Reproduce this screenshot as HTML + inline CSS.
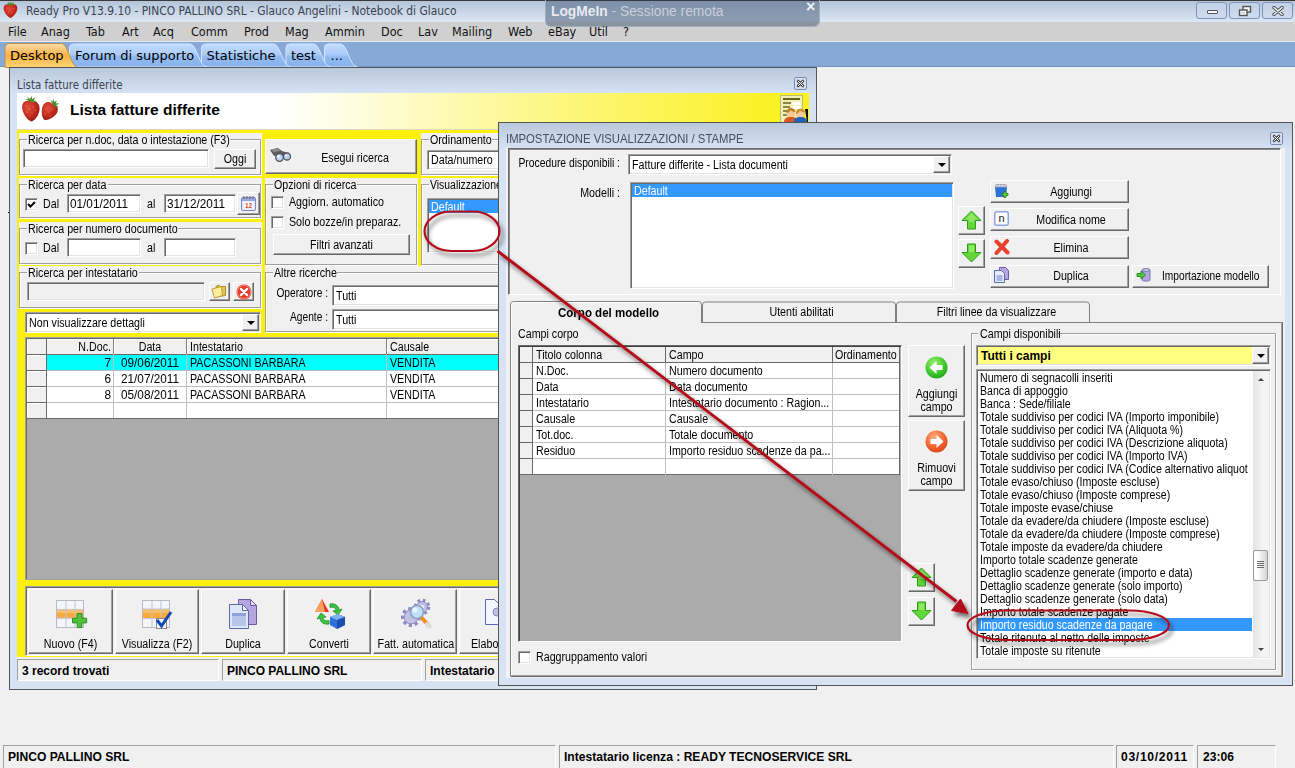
<!DOCTYPE html>
<html><head><meta charset="utf-8"><title>Ready Pro</title>
<style>
*{box-sizing:border-box;margin:0;padding:0}
html,body{width:1295px;height:768px;overflow:hidden;background:#f0f0f0}
body{position:relative;font:12px "Liberation Sans",sans-serif;color:#000}
.a{position:absolute}
/* MS Sans Serif-like text: 12px Liberation Sans squeezed horizontally */
.t{position:absolute;white-space:nowrap;font:12px/14px "Liberation Sans",sans-serif;transform:scaleX(var(--s,.89));transform-origin:0 0}
.t.n{--s:.98}
.t.c{transform-origin:50% 0;text-align:center}
.t.r{transform-origin:100% 0;text-align:right}
.b{position:absolute;white-space:nowrap;font:bold 12px/14px "Liberation Sans",sans-serif}
.w{color:#fff}
/* classic 3D controls */
.btn{position:absolute;background:#f0f0f0;border:1px solid;border-color:#fff #696969 #696969 #fff;box-shadow:inset -1px -1px 0 #a0a0a0,inset 1px 1px 0 #f0f0f0}
.inp{position:absolute;background:#fff;border:1px solid;border-color:#a0a0a0 #fff #fff #a0a0a0;box-shadow:inset 1px 1px 0 #696969,inset -1px -1px 0 #e3e3e3}
.inp.dis{background:#f0f0f0}
.gb{position:absolute;border:1px solid #a0a0a0;box-shadow:1px 1px 0 #fff,inset 1px 1px 0 #fff}
.gl{position:absolute;background:#f0f0f0;height:14px}
.pn{position:absolute;background:#f0f0f0}
.cb{position:absolute;width:13px;height:13px;background:#fff;border:1px solid;border-color:#a0a0a0 #fff #fff #a0a0a0;box-shadow:inset 1px 1px 0 #696969,inset -1px -1px 0 #e3e3e3}
.dd{position:absolute;width:17px;background:#f0f0f0;border:1px solid;border-color:#fff #696969 #696969 #fff;box-shadow:inset -1px -1px 0 #a0a0a0}
.dd:after{content:"";position:absolute;left:4px;top:50%;margin-top:-2px;border:4px solid transparent;border-top:4px solid #000;border-bottom:0}
.wb{top:2px;width:31px;height:17px;border:1px solid #7f93b6;border-radius:3px;background:linear-gradient(#c3d1e6,#cfdbee)}
.m{position:absolute;top:23px;font:12.5px/17px 'DejaVu Sans Condensed','DejaVu Sans',sans-serif;color:#111;white-space:nowrap}
.tb{position:absolute;top:48px;font:13px/16px 'DejaVu Sans',sans-serif;color:#000;white-space:nowrap}
.xb{width:13px;height:13px;border:1px solid #7a8cb4;border-radius:2px;background:#d6e0f0}
.xb svg{position:absolute;left:0;top:0}
.hl{left:27px;width:518px;height:1px;background:#c0c0c0}
.vl{top:339px;width:1px;height:79px;background:#c0c0c0}
.sc{border:1px solid;border-color:#a0a0a0 #fff #fff #a0a0a0}
.g2h{left:520px;width:380px;height:1px;background:#c0c0c0}
.g2v{top:347px;width:1px;height:128px;background:#c0c0c0}
.g2r{left:520px;width:13px;height:1px;background:#696969}
.li{position:absolute;left:0;white-space:nowrap;font:12px/13px "Liberation Sans",sans-serif;transform:scaleX(.883);transform-origin:0 0}
.rh{left:27px;width:19px;height:1px;background:#696969;box-shadow:0 1px 0 #fff}
</style></head><body>
<!-- ===== main title bar ===== -->
<div class="a" id="titlebar" style="left:0;top:0;width:1295px;height:22px;background:linear-gradient(#b4c4d8,#dce7f5);border-top:1px solid #3a3a3a"></div>
<div class="a" id="menubar" style="left:0;top:22px;width:1295px;height:20px;background:#d0d0d0;border-bottom:1px solid #e8e8e8"></div>
<div class="a" id="tabstrip" style="left:0;top:42px;width:1295px;height:25px;background:#87a9d7;border-bottom:1px solid #6f98d2"></div>
<!-- strawberry app icon -->
<svg class="a" style="left:3px;top:1px" width="16" height="18" viewBox="0 0 16 18"><defs><radialGradient id="sa" cx=".4" cy=".35" r=".75"><stop offset="0" stop-color="#e44a38"/><stop offset=".6" stop-color="#c4261c"/><stop offset="1" stop-color="#96180f"/></radialGradient></defs><path d="M7.500 4C3 2 0 4.500 .8 8.500c.7 3.500 4 7.500 6.700 8.500 2.700-1 6-5 6.700-8.500C15 4.500 12 2 7.500 4z" fill="url(#sa)"/><path d="M7.500 4.500L3 3l2.500-.3L4.500.5 7 2.500 7.800 0l.8 2.500L11 .8l-.8 2 2.800.2-4.500 1.500z" fill="#4a8a28"/><g fill="#f0a080" opacity=".6"><circle cx="4" cy="7" r=".5"/><circle cx="7" cy="9" r=".5"/><circle cx="10.500" cy="7.500" r=".5"/><circle cx="5.500" cy="11.500" r=".5"/><circle cx="9" cy="12" r=".5"/></g></svg>
<div class="a" style="left:26px;top:4px;font:11.9px/15px 'DejaVu Sans Condensed','DejaVu Sans',sans-serif;color:#3b4350;white-space:nowrap">Ready Pro V13.9.10 - PINCO PALLINO SRL - Glauco Angelini - Notebook di Glauco</div>
<!-- LogMeIn overlay -->
<div class="a" style="left:545px;top:0;width:275px;height:27px;background:linear-gradient(#343d49 0,#343d49 1px,#7e90a8 1px,#8c9db3 21px,#8a949f 22px,#8a949f 100%);border-radius:0 0 6px 6px;border:1px solid #a2adbc;border-top:0"></div>
<div class="a" style="left:551px;top:3px;font:13.8px/17px 'Liberation Sans',sans-serif;color:#c9d0da;white-space:nowrap"><b style="color:#e6eaf0">LogMeIn</b> - Sessione remota</div>
<div class="a" style="left:806px;top:-1px;font:bold 16px/16px 'Liberation Sans',sans-serif;color:#eef1f5">&#215;</div>
<!-- window buttons -->
<div class="a wb" style="left:1196px"><i style="position:absolute;left:10px;top:7px;width:11px;height:4px;border:1px solid #555;background:#f4f4f4;border-radius:1px"></i></div>
<div class="a wb" style="left:1229px"><svg style="position:absolute;left:8px;top:2px" width="14" height="12" viewBox="0 0 14 12"><rect x="5" y="1.500" width="7.500" height="5.500" fill="#f4f4f4" stroke="#555" stroke-width="1.400"/><rect x="1.500" y="5" width="7.500" height="5.500" fill="#f4f4f4" stroke="#555" stroke-width="1.400"/><rect x="3.500" y="7" width="3.500" height="1.500" fill="#c9d6ea"/></svg></div>
<div class="a wb" style="left:1262px"><svg style="position:absolute;left:9px;top:3px" width="12" height="10" viewBox="0 0 12 10"><path d="M2 1.500l8 7M10 1.500l-8 7" stroke="#505050" stroke-width="3.400" stroke-linecap="round"/><path d="M2 1.500l8 7M10 1.500l-8 7" stroke="#f4f4f4" stroke-width="1.500" stroke-linecap="round"/></svg></div>
<span class="m" style="left:8px">File</span><span class="m" style="left:41px">Anag</span><span class="m" style="left:86px">Tab</span><span class="m" style="left:122px">Art</span><span class="m" style="left:153px">Acq</span><span class="m" style="left:191px">Comm</span><span class="m" style="left:244px">Prod</span><span class="m" style="left:285px">Mag</span><span class="m" style="left:325px">Ammin</span><span class="m" style="left:381px">Doc</span><span class="m" style="left:418px">Lav</span><span class="m" style="left:452px">Mailing</span><span class="m" style="left:508px">Web</span><span class="m" style="left:548px">eBay</span><span class="m" style="left:589px">Util</span><span class="m" style="left:623px">?</span>

<svg class="a" style="left:0;top:0" width="400" height="68" viewBox="0 0 400 68"><defs><linearGradient id="gb" x1="0" y1="0" x2="0" y2="1"><stop offset="0" stop-color="#c2dbff"/><stop offset=".48" stop-color="#a9cbfa"/><stop offset=".52" stop-color="#94bcf2"/><stop offset="1" stop-color="#86b1ec"/></linearGradient><linearGradient id="go" x1="0" y1="0" x2="0" y2="1"><stop offset="0" stop-color="#fbdcaa"/><stop offset=".5" stop-color="#f8b145"/><stop offset="1" stop-color="#fdd474"/></linearGradient></defs><path d="M324.5 67L324.5 48Q324.5 44 328.5 44L340.5 44C347.5 44 349.5 67 357.5 67Z" fill="url(#gb)" stroke="#d5e6ff" stroke-width="1"/><path d="M286 67L286 48Q286 44 290 44L313.5 44C320.5 44 322.5 67 330.5 67Z" fill="url(#gb)" stroke="#d5e6ff" stroke-width="1"/><path d="M201.5 67L201.5 48Q201.5 44 205.5 44L273.5 44C280.5 44 282.5 67 290.5 67Z" fill="url(#gb)" stroke="#d5e6ff" stroke-width="1"/><path d="M69.5 67L69.5 48Q69.5 44 73.5 44L190 44C197 44 199 67 207 67Z" fill="url(#gb)" stroke="#d5e6ff" stroke-width="1"/><path d="M5 67.5L5 47.5Q5 43.5 9 43.5L61.5 43.5C68.5 43.5 70.5 67.5 78.5 67.5Z" fill="url(#go)" stroke="#b4934f" stroke-width="1"/></svg>
<span class="tb" style="left:330.5px">...</span><span class="tb" style="left:291px">test</span><span class="tb" style="left:206.5px">Statistiche</span><span class="tb" style="left:75px">Forum di supporto</span><span class="tb" style="left:10px">Desktop</span>

<!-- ===== window: Lista fatture differite ===== -->
<div class="a" id="win1" style="left:9px;top:67px;width:808px;height:623px;border:1px solid #565656;background:linear-gradient(#b9c8da 0,#d5e2f5 25px,#d7e3f3 26px)"></div>
<div class="a" style="left:17px;top:78px;font:11.4px/14px 'DejaVu Sans Condensed','DejaVu Sans',sans-serif;color:#3b4350;white-space:nowrap">Lista fatture differite</div>
<div class="a xb" style="left:794px;top:77px"><svg width="11" height="11" viewBox="0 0 11 11"><path d="M3 3l5 5M8 3l-5 5" stroke="#444" stroke-width="2.600" stroke-linecap="round"/><path d="M3 3l5 5M8 3l-5 5" stroke="#fff" stroke-width="1" stroke-linecap="round"/></svg></div>
<div class="a" id="hdr" style="left:17px;top:93px;width:792px;height:36px;background:linear-gradient(90deg,#fff 0,#fff 33%,#fefcca 48%,#fcf672 72%,#fbf11e 97%)"></div>
<!-- strawberries -->
<svg class="a" style="left:21px;top:96px" width="40" height="28" viewBox="0 0 40 28"><defs><radialGradient id="sb" cx=".35" cy=".35" r=".75"><stop offset="0" stop-color="#e2523e"/><stop offset=".55" stop-color="#c22a1e"/><stop offset="1" stop-color="#8e1a12"/></radialGradient></defs><path d="M9 5C3 3.500 0 8 1.500 14c1.500 6 6 11 9 11.500 3-.5 7-5.500 8-11.500C19.500 8 15 3.500 9 5z" fill="url(#sb)"/><g transform="rotate(28 28 15)"><path d="M28 7c-6-1.500-9 3-7.500 8.500 1.500 5 5 9 7.500 9.500 2.500-.5 6-4.500 7.500-9.500C37 10 34 5.500 28 7z" fill="url(#sb)"/><path d="M28 7.500l-4-3 3 .5-1-3 2.500 2.500L30 2l.5 3 3-1.500-2 3 3.500.5-4 1.500z" fill="#4c8a2c"/></g><path d="M9 5.500L4 3l3.500.3L6 .5l3 2.500L10.500 0l.8 3 3.200-1.500-2 3 3.500.5-4 1.500z" fill="#4c8a2c"/><g fill="#e8b070" opacity=".75"><circle cx="5" cy="10" r=".6"/><circle cx="8" cy="13" r=".6"/><circle cx="12" cy="11" r=".6"/><circle cx="6" cy="16" r=".6"/><circle cx="11" cy="17" r=".6"/><circle cx="14" cy="14" r=".6"/><circle cx="9" cy="20" r=".6"/><circle cx="25" cy="13" r=".6"/><circle cx="28" cy="16" r=".6"/><circle cx="24" cy="18" r=".6"/><circle cx="29" cy="20" r=".6"/><circle cx="31" cy="13" r=".6"/></g></svg>
<div class="a" style="left:70px;top:101px;font:bold 15.5px/18px 'Liberation Sans',sans-serif;white-space:nowrap">Lista fatture differite</div>
<!-- header right icon -->
<svg class="a" style="left:780px;top:95px" width="29" height="27" viewBox="0 0 29 27"><rect x=".5" y=".5" width="22" height="27" fill="#eef0b4" stroke="#b9bb7c"/><rect x="3" y="3" width="17" height="2" fill="#6a6420"/><path d="M3 8h8M3 12h7M3 16h6M3 20h6" stroke="#6a6420" stroke-width="1.500"/><rect x="12.500" y="7" width="8" height="3" fill="#fff"/><rect x="12.500" y="11" width="8" height="3" fill="#fff"/><circle cx="11" cy="19" r="4.500" fill="#f6c89a"/><path d="M6.500 18a4.500 4.500 0 0 1 9-1c-2 0-4-1-5-2-1 2-2 3-4 3z" fill="#c07a20"/><path d="M4 27c0-4 3-5 7-5s7 1 7 5z" fill="#d8552a"/><circle cx="20.500" cy="19" r="4.500" fill="#f6c89a"/><path d="M16 19a4.500 4.500 0 0 1 9-1.500c-2 0-4-1-5-2-1 2-2 3-4 3.500z" fill="#c98a28"/><path d="M14 27c0-4 3-5 6.500-5s6.500 1 6.500 5z" fill="#1f62b8"/><path d="M25 14h3v13h-1z" fill="#111"/></svg>
<div class="a" id="dot" style="left:8px;top:212px;width:1px;height:1px;background:#000"></div>
<!-- yellow body -->
<div class="a" id="ybody" style="left:17px;top:129px;width:792px;height:528px;background:#fbef0e;border-top:1px solid #d9d9c6"></div>

<!-- P1: Ricerca per n.doc -->
<div class="pn" style="left:19px;top:133px;width:243px;height:43px"></div>
<div class="gb" style="left:19px;top:139px;width:242px;height:36px"></div>
<div class="gl" style="left:27px;top:133px;width:203px"></div>
<span class="t" style="left:28px;top:133px">Ricerca per n.doc, data o intestazione (F3)</span>
<div class="inp" style="left:23px;top:149px;width:186px;height:19px"></div>
<div class="btn" style="left:214px;top:149px;width:42px;height:20px"></div>
<span class="t c" style="left:214px;top:152px;width:42px">Oggi</span>

<!-- P2: Ricerca per data -->
<div class="pn" style="left:19px;top:178px;width:243px;height:41px"></div>
<div class="gb" style="left:19px;top:184px;width:242px;height:34px"></div>
<div class="gl" style="left:27px;top:178px;width:81px"></div>
<span class="t" style="left:28px;top:178px">Ricerca per data</span>
<div class="cb" style="left:25px;top:198px"><svg width="11" height="11" viewBox="0 0 11 11" style="position:absolute;left:0;top:0"><path d="M2 5l2.500 2.500L9 3" stroke="#000" stroke-width="2" fill="none"/></svg></div>
<span class="t" style="left:43px;top:197px">Dal</span>
<div class="inp" style="left:67px;top:194px;width:74px;height:19px"></div>
<span class="t n" style="left:70px;top:197px">01/01/2011</span>
<span class="t" style="left:147px;top:197px">al</span>
<div class="inp" style="left:164px;top:194px;width:72px;height:19px"></div>
<span class="t n" style="left:167px;top:197px">31/12/2011</span>
<div class="btn" style="left:237px;top:192px;width:23px;height:23px"></div>
<svg class="a" style="left:241px;top:195px" width="15" height="16" viewBox="0 0 15 16"><rect x=".5" y="2.500" width="14" height="13" rx="1.500" fill="#e8ecfa" stroke="#7a86c8"/><rect x="1" y="3" width="13" height="3" fill="#9aa6e0"/><path d="M3 1v3M6 1v3M9 1v3M12 1v3" stroke="#666" stroke-width="1"/><rect x="3" y="7" width="9" height="6" fill="#fff"/><text x="7.500" y="12.500" font-family="Liberation Sans,sans-serif" font-size="6.500" font-weight="bold" fill="#e0481c" text-anchor="middle">12</text></svg>

<!-- P3: Ricerca per numero documento -->
<div class="pn" style="left:19px;top:222px;width:243px;height:43px"></div>
<div class="gb" style="left:19px;top:228px;width:242px;height:36px"></div>
<div class="gl" style="left:27px;top:222px;width:151px"></div>
<span class="t" style="left:28px;top:222px">Ricerca per numero documento</span>
<div class="cb" style="left:25px;top:242px"></div>
<span class="t" style="left:43px;top:241px">Dal</span>
<div class="inp" style="left:67px;top:238px;width:74px;height:19px"></div>
<span class="t" style="left:147px;top:241px">al</span>
<div class="inp" style="left:164px;top:238px;width:72px;height:19px"></div>

<!-- P4: Ricerca per intestatario -->
<div class="pn" style="left:19px;top:266px;width:243px;height:43px"></div>
<div class="gb" style="left:19px;top:272px;width:242px;height:36px"></div>
<div class="gl" style="left:27px;top:266px;width:112px"></div>
<span class="t" style="left:28px;top:266px">Ricerca per intestatario</span>
<div class="inp dis" style="left:27px;top:282px;width:178px;height:19px"></div>
<div class="btn" style="left:209px;top:282px;width:21px;height:19px"></div>
<svg class="a" style="left:211px;top:283px" width="17" height="16" viewBox="0 0 17 16"><path d="M5 3.500l3-1.500 1 1.500h5.500v9L5 14z" fill="#e8c64c" stroke="#a8861c" stroke-width=".9"/><path d="M1 6l9.500-2.500 1 9L3.500 15z" fill="#fcec9c" stroke="#b8962c" stroke-width=".9"/></svg>
<div class="btn" style="left:233px;top:282px;width:21px;height:19px"></div>
<svg class="a" style="left:235.500px;top:283.500px" width="16" height="16" viewBox="0 0 16 16"><circle cx="8" cy="8" r="7.500" fill="#e23a28"/><circle cx="8" cy="8" r="6.500" fill="none" stroke="#f58a78" stroke-width="1"/><path d="M5 5l6 6M11 5l-6 6" stroke="#fff" stroke-width="2.400" stroke-linecap="round"/></svg>

<!-- combo dettagli -->
<div class="inp" style="left:25px;top:312px;width:236px;height:21px"></div>
<span class="t" style="left:29px;top:316px">Non visualizzare dettagli</span>
<div class="dd" style="left:242px;top:314px;height:17px"></div>
<!-- Esegui ricerca -->
<div class="btn" style="left:265px;top:139px;width:152px;height:35px"></div>
<svg class="a" style="left:268px;top:147px" width="24" height="16" viewBox="0 0 24 16"><path d="M2 3l8-2 4 3 6 2-3 4-6-2-5 1z" fill="#5a5a5a"/><path d="M3 2.500l7-1.500 3 2.500-7 2z" fill="#8a8a8a"/><circle cx="11.500" cy="10.500" r="3.800" fill="#b9d3f4" stroke="#555" stroke-width="1.300"/><circle cx="19" cy="9.500" r="3.500" fill="#b9d3f4" stroke="#555" stroke-width="1.300"/><circle cx="10.500" cy="9.500" r="1.200" fill="#fff"/><circle cx="18" cy="8.500" r="1.100" fill="#fff"/></svg>
<span class="t c" style="left:310px;top:151px;width:90px">Esegui ricerca</span>

<!-- Opzioni di ricerca -->
<div class="pn" style="left:265px;top:178px;width:153px;height:88px"></div>
<div class="gb" style="left:265px;top:184px;width:152px;height:81px"></div>
<div class="gl" style="left:273px;top:178px;width:84px"></div>
<span class="t" style="left:274px;top:178px">Opzioni di ricerca</span>
<div class="cb" style="left:271px;top:196px"></div>
<span class="t" style="left:289px;top:195px">Aggiorn. automatico</span>
<div class="cb" style="left:271px;top:216px"></div>
<span class="t" style="left:289px;top:215px">Solo bozze/in preparaz.</span>
<div class="btn" style="left:273px;top:234px;width:137px;height:21px"></div>
<span class="t c" style="left:273px;top:238px;width:137px">Filtri avanzati</span>

<!-- Ordinamento -->
<div class="pn" style="left:421px;top:133px;width:100px;height:43px"></div>
<div class="gb" style="left:421px;top:139px;width:110px;height:36px"></div>
<div class="gl" style="left:429px;top:133px;width:63px"></div>
<span class="t" style="left:430px;top:133px">Ordinamento</span>
<div class="inp" style="left:427px;top:150px;width:100px;height:20px"></div>
<span class="t" style="left:431px;top:153px">Data/numero</span>

<!-- Visualizzazione -->
<div class="pn" style="left:421px;top:178px;width:100px;height:88px"></div>
<div class="gb" style="left:421px;top:184px;width:110px;height:81px"></div>
<div class="gl" style="left:429px;top:178px;width:76px"></div>
<span class="t" style="left:430px;top:178px;--s:.87">Visualizzazione</span>
<div class="inp" style="left:427px;top:198px;width:100px;height:55px"></div>
<div class="a" style="left:429px;top:200px;width:90px;height:13px;background:#3399ff"></div>
<span class="t w" style="left:431px;top:200px">Default</span>

<!-- Altre ricerche -->
<div class="pn" style="left:265px;top:266px;width:260px;height:67px"></div>
<div class="gb" style="left:265px;top:272px;width:270px;height:60px"></div>
<div class="gl" style="left:273px;top:266px;width:64px"></div>
<span class="t" style="left:274px;top:266px">Altre ricerche</span>
<span class="t r" style="left:258px;top:286px;width:70px;--s:.85">Operatore :</span>
<div class="inp" style="left:332px;top:285px;width:200px;height:21px"></div>
<span class="t" style="left:336px;top:289px">Tutti</span>
<span class="t r" style="left:258px;top:310px;width:70px;--s:.85">Agente :</span>
<div class="inp" style="left:332px;top:309px;width:200px;height:21px"></div>
<span class="t" style="left:336px;top:313px">Tutti</span>
<!-- grid -->
<div class="a" id="grid1" style="left:25px;top:337px;width:520px;height:243px;background:#ababab;border:1px solid #a0a0a0;border-right:0;box-shadow:inset 1px 1px 0 #696969"></div>
<div class="a" style="left:27px;top:339px;width:518px;height:80px;background:#fff"></div>
<div class="a" style="left:47px;top:355px;width:498px;height:15px;background:#00ffff"></div>
<div class="a" style="left:27px;top:339px;width:518px;height:15px;background:#f0f0f0;box-shadow:inset 0 1px 0 #fff"></div>
<div class="a" style="left:27px;top:339px;width:19px;height:79px;background:#f0f0f0;box-shadow:inset 1px 0 0 #fff"></div>
<!-- grid lines -->
<div class="a hl" style="top:354px;background:#696969"></div><div class="a hl" style="top:370px"></div><div class="a hl" style="top:386px"></div><div class="a hl" style="top:402px"></div><div class="a hl" style="top:418px;background:#696969"></div>
<div class="a vl" style="left:46px;background:#696969"></div><div class="a vl" style="left:113px"></div><div class="a vl" style="left:186px"></div><div class="a vl" style="left:386px"></div>
<div class="a vl" style="left:113px;height:15px;background:#808080;box-shadow:1px 0 0 #fff"></div><div class="a vl" style="left:186px;height:15px;background:#808080;box-shadow:1px 0 0 #fff"></div><div class="a vl" style="left:386px;height:15px;background:#808080;box-shadow:1px 0 0 #fff"></div>
<div class="a rh" style="top:370px"></div><div class="a rh" style="top:386px"></div><div class="a rh" style="top:402px"></div><div class="a rh" style="top:354px;background:none"></div>
<span class="t r" style="left:51px;top:340px;width:60px">N.Doc.</span>
<span class="t c" style="left:114px;top:340px;width:72px">Data</span>
<span class="t" style="left:190px;top:340px">Intestatario</span>
<span class="t" style="left:390px;top:340px">Causale</span>
<span class="t n r" style="left:51px;top:356px;width:60px">7</span><span class="t n" style="left:121px;top:356px">09/06/2011</span><span class="t" style="left:190px;top:356px">PACASSONI BARBARA</span><span class="t" style="left:390px;top:356px">VENDITA</span>
<span class="t n r" style="left:51px;top:372px;width:60px">6</span><span class="t n" style="left:121px;top:372px">21/07/2011</span><span class="t" style="left:190px;top:372px">PACASSONI BARBARA</span><span class="t" style="left:390px;top:372px">VENDITA</span>
<span class="t n r" style="left:51px;top:388px;width:60px">8</span><span class="t n" style="left:121px;top:388px">05/08/2011</span><span class="t" style="left:190px;top:388px">PACASSONI BARBARA</span><span class="t" style="left:390px;top:388px">VENDITA</span>

<!-- bottom button panel -->
<div class="pn" style="left:25px;top:586px;width:520px;height:70px;border-top:1px solid #a0a0a0;border-left:1px solid #a0a0a0;border-bottom:1px solid #fff;box-shadow:inset 1px 1px 0 #696969"></div>
<div class="btn" style="left:28px;top:589px;width:85px;height:65px"></div>
<div class="btn" style="left:115px;top:589px;width:84px;height:65px"></div>
<div class="btn" style="left:201px;top:589px;width:84px;height:65px"></div>
<div class="btn" style="left:287px;top:589px;width:84px;height:65px"></div>
<div class="btn" style="left:373px;top:589px;width:84px;height:65px"></div>
<div class="btn" style="left:459px;top:589px;width:84px;height:65px"></div>
<span class="t c" style="left:28px;top:637px;width:85px">Nuovo (F4)</span>
<span class="t c" style="left:115px;top:637px;width:84px">Visualizza (F2)</span>
<span class="t c" style="left:201px;top:637px;width:84px">Duplica</span>
<span class="t c" style="left:287px;top:637px;width:84px">Converti</span>
<span class="t c" style="left:373px;top:637px;width:84px">Fatt. automatica</span>
<span class="t" style="left:471px;top:637px">Elabora</span>
<!-- icons -->
<svg class="a" style="left:56px;top:599px" width="32" height="32" viewBox="0 0 32 32"><rect x=".5" y="1.500" width="27" height="27" fill="#f4f4fb" stroke="#b9b9c8"/><rect x="1" y="10" width="26" height="9.500" fill="#f9a83a"/><rect x="1" y="10" width="26" height="4" fill="#fbbd62"/><path d="M10 2v26M19 2v26M1 11h26M1 19h26" stroke="#c4c4d4" stroke-width="1"/><path d="M21 17h5v5h5v5h-5v5h-5v-5h-5v-5h5z" transform="translate(1.500 -1.500) scale(.94)" fill="#4fc13a" stroke="#2a8a1c" stroke-width="1"/></svg>
<svg class="a" style="left:142px;top:599px" width="32" height="32" viewBox="0 0 32 32"><rect x=".5" y="1.500" width="27" height="27" fill="#f4f4fb" stroke="#b9b9c8"/><rect x="1" y="10" width="26" height="9.500" fill="#f9a83a"/><rect x="1" y="10" width="26" height="4" fill="#fbbd62"/><path d="M10 2v26M19 2v26M1 10h26M1 19.500h26" stroke="#c4c4d4" stroke-width="1"/><rect x="14.500" y="19.500" width="10" height="10" fill="#f8f8f8" stroke="#888"/><path d="M15 21l4.500 6L29 13" stroke="#1446b4" stroke-width="3" fill="none"/></svg>
<svg class="a" style="left:228px;top:598px" width="32" height="32" viewBox="0 0 32 32"><path d="M10.500 1.500h12l6 6v19h-18z" fill="#b6a6e0" stroke="#6a5aa8"/><path d="M22.500 1.500v6h6z" fill="#ded6f4" stroke="#6a5aa8"/><path d="M1.500 6.500h13l6 6v18h-19z" fill="#dfe6f8" stroke="#5a6aa8"/><path d="M14.500 6.500v6h6z" fill="#fff" stroke="#5a6aa8"/><rect x="4" y="15" width="14" height="13" fill="#b9c4ea"/><rect x="4" y="15" width="14" height="3" fill="#93a2dc"/></svg>
<svg class="a" style="left:314px;top:598px" width="32" height="32" viewBox="0 0 32 32"><path d="M8 1l7 13H1z" fill="#e8341c"/><path d="M8 1l3 13H1z" fill="#f8a060"/><path d="M16 6c5-1 9 2 9 6l3-1-4 6-5-4 3-.5c0-2-2-4-6-3z" fill="#3cc43c" stroke="#1f8a2a" stroke-width=".8"/><path d="M15 26c-5 1-9-2-9-6l-3 1 4-6 5 4-3 .5c0 2 2 4 6 3z" fill="#3cc43c" stroke="#1f8a2a" stroke-width=".8"/><path d="M16 19l8-3 7 3v8l-8 4-7-4z" fill="#2f6fd8"/><path d="M16 19l8-3 7 3-8 3z" fill="#7fb0f4"/><path d="M23 22l8-3v8l-8 4z" fill="#1c4eb0"/></svg>
<svg class="a" style="left:400px;top:598px" width="32" height="32" viewBox="0 0 32 32"><g fill="#c2c0e4" stroke="#8c88c0" stroke-width="1"><circle cx="22" cy="9" r="6.500" stroke-dasharray="2.600 2.500" stroke-width="3.500" fill="none"/><circle cx="22" cy="9" r="5.500"/><circle cx="11" cy="19" r="8" stroke-dasharray="3 2.800" stroke-width="4" fill="none"/><circle cx="11" cy="19" r="7"/></g><circle cx="22" cy="9" r="2" fill="#f0f0f0"/><path d="M21 19l8 9" stroke="#f08a2c" stroke-width="4" stroke-linecap="round"/><path d="M27 26l2.500 2.500" stroke="#ddd" stroke-width="4" stroke-linecap="round"/><circle cx="17" cy="14" r="6.500" fill="#bfe0fa" stroke="#8fa4bc" stroke-width="1.600"/><circle cx="15" cy="12" r="2.500" fill="#eaf6ff"/></svg>
<svg class="a" style="left:485px;top:598px" width="13" height="32" viewBox="0 0 13 32"><path d="M.5 1.500h9l6 6v19h-15z" fill="#f2f6ff" stroke="#5a6ab0"/><circle cx="12" cy="14" r="4" fill="#c2c0e4" stroke="#8c88c0"/></svg>

<!-- window status bar -->
<div class="pn" style="left:17px;top:657px;width:792px;height:24px"></div>
<div class="a sc" style="left:17px;top:659px;width:202px;height:22px"></div>
<div class="a sc" style="left:222px;top:659px;width:200px;height:22px"></div>
<div class="a sc" style="left:425px;top:659px;width:384px;height:22px"></div>
<span class="b" style="left:22px;top:664px">3 record trovati</span>
<span class="b" style="left:227px;top:664px">PINCO PALLINO SRL</span>
<span class="b" style="left:430px;top:664px">Intestatario</span>
<!-- ===== dialog: IMPOSTAZIONE VISUALIZZAZIONI / STAMPE ===== -->
<div class="a" id="dlg" style="left:498px;top:122px;width:795px;height:564px;border:1px solid #565656;background:linear-gradient(#b9c8da 0,#d5e2f5 25px,#d7e3f3 26px)"></div>
<div class="a" style="left:506px;top:148px;width:779px;height:530px;background:#f0f0f0"></div>
<div class="a" style="left:506px;top:131px;font:13px/16px 'Liberation Sans',sans-serif;color:#46505e;white-space:nowrap;transform:scaleX(.869);transform-origin:0 0">IMPOSTAZIONE VISUALIZZAZIONI / STAMPE</div>
<div class="a xb" style="left:1270px;top:132px"><svg width="11" height="11" viewBox="0 0 11 11"><path d="M3 3l5 5M8 3l-5 5" stroke="#444" stroke-width="2.600" stroke-linecap="round"/><path d="M3 3l5 5M8 3l-5 5" stroke="#fff" stroke-width="1" stroke-linecap="round"/></svg></div>
<!-- sunken top panel -->
<div class="a" style="left:508px;top:148px;width:773px;height:147px;border:1px solid;border-color:#696969 #fff #fff #696969;box-shadow:inset 1px 1px 0 #8c8c8c"></div>
<span class="t r" style="left:500px;top:156px;width:120px;--s:.86">Procedure disponibili :</span>
<div class="inp" style="left:628px;top:154px;width:324px;height:21px"></div>
<span class="t" style="left:632px;top:158px">Fatture differite - Lista documenti</span>
<div class="dd" style="left:933px;top:156px;height:17px"></div>
<span class="t r" style="left:540px;top:186px;width:80px">Modelli :</span>
<div class="inp" style="left:630px;top:182px;width:324px;height:107px"></div>
<div class="a" style="left:632px;top:184px;width:320px;height:13px;background:#3399ff"></div>
<span class="t w" style="left:634px;top:184px">Default</span>
<!-- up / down -->
<div class="btn" style="left:958px;top:206px;width:27px;height:29px"></div>
<svg class="a" style="left:961px;top:210px" width="21" height="20" viewBox="0 0 21 20"><path d="M10.500 1L20 10.500h-5.500V19h-8v-8.500H1z" fill="#62d838" stroke="#2f9a1a" stroke-width="1"/><path d="M10.500 3L17 9.500h-4V12H8V9.500H4z" fill="#a6f07a" opacity=".7"/></svg>
<div class="btn" style="left:958px;top:239px;width:27px;height:29px"></div>
<svg class="a" style="left:961px;top:243px" width="21" height="20" viewBox="0 0 21 20"><path d="M10.500 19L20 9.500h-5.500V1h-8v8.500H1z" fill="#62d838" stroke="#2f9a1a" stroke-width="1"/><path d="M8 2.500h5V9H8z" fill="#a6f07a" opacity=".7"/></svg>
<!-- buttons -->
<div class="btn" style="left:990px;top:180px;width:139px;height:23px"></div>
<div class="btn" style="left:990px;top:208px;width:139px;height:23px"></div>
<div class="btn" style="left:990px;top:236px;width:139px;height:23px"></div>
<div class="btn" style="left:990px;top:265px;width:139px;height:23px"></div>
<div class="btn" style="left:1132px;top:265px;width:137px;height:23px"></div>
<span class="t c" style="left:1021px;top:185px;width:100px">Aggiungi</span>
<span class="t c" style="left:1021px;top:213px;width:100px">Modifica nome</span>
<span class="t c" style="left:1021px;top:241px;width:100px">Elimina</span>
<span class="t c" style="left:1021px;top:269px;width:100px">Duplica</span>
<span class="t" style="left:1162px;top:269px;--s:.85">Importazione modello</span>
<!-- button icons -->
<svg class="a" style="left:994px;top:183px" width="16" height="16" viewBox="0 0 16 16"><path d="M1 4h12l-1 10H2z" fill="#2a72d8"/><path d="M1 4l1-2.500h10L13 4z" fill="#e6e6ee" stroke="#9a9ab0" stroke-width=".8"/><path d="M4 1.500v3M7 1.500v3M10 1.500v3" stroke="#9a9ab0" stroke-width=".8"/><path d="M10 8.500h2v2h2v2h-2v2h-2v-2H8v-2h2z" fill="#5fd23c" stroke="#1f7a14" stroke-width=".8"/></svg>
<svg class="a" style="left:994px;top:211px" width="16" height="16" viewBox="0 0 16 16"><rect x=".75" y=".75" width="13.500" height="13.500" rx="2" fill="#fff" stroke="#8ea4e0" stroke-width="1.500"/><text x="7.500" y="11" font-family="Liberation Sans,sans-serif" font-size="11" fill="#222" text-anchor="middle">n</text></svg>
<svg class="a" style="left:994px;top:239px" width="16" height="16" viewBox="0 0 16 16"><path d="M2.500 2.500l11 11M13 2l-10.500 12" stroke="#e8402c" stroke-width="4" stroke-linecap="round"/></svg>
<svg class="a" style="left:994px;top:267px" width="16" height="16" viewBox="0 0 16 16"><path d="M5.500.5h6l3 3v9h-9z" fill="#b6a6e0" stroke="#6a5aa8"/><path d="M.5 3.500h7l3 3v9h-10z" fill="#e6ecfa" stroke="#5a6aa8"/><rect x="2.500" y="8" width="6" height="6" fill="#a8b6e6"/></svg>
<svg class="a" style="left:1136px;top:267px" width="16" height="16" viewBox="0 0 16 16"><path d="M6 3c0-1.500 8-1.500 8 0v10c0 1.500-8 1.500-8 0z" fill="#b0a6dc" stroke="#6a62a8" stroke-width=".8"/><ellipse cx="10" cy="3" rx="4" ry="1.300" fill="#dcd6f2" stroke="#6a62a8" stroke-width=".8"/><path d="M1 6.500h4V4l4.500 4L5 12V9.500H1z" fill="#4cc83a" stroke="#1f7a14" stroke-width=".8"/></svg>
<!-- tab control -->
<svg class="a" style="left:508px;top:298px" width="780" height="382" viewBox="0 0 780 382">
<!-- panel -->
<path d="M2.500 24.500H774.500V378.500H2.500Z" fill="#f0f0f0"/>
<path d="M774.500 24V378.500H2.500" fill="none" stroke="#696969"/><path d="M773.500 25V377.500H3.500" fill="none" stroke="#a0a0a0"/>
<!-- tab 2 and 3 -->
<path d="M194.500 24V7q0-3 3-3h187q3 0 3 3V24" fill="#f0f0f0" stroke="#808080"/>
<path d="M388.500 24V7q0-3 3-3h187q3 0 3 3V24" fill="#f0f0f0" stroke="#808080"/>
<path d="M194 24.500H774" stroke="#808080"/>
<!-- selected tab 1 -->
<path d="M2.500 378V6.500q0-3 3-3h185q3 0 3 3V25" fill="#f0f0f0"/>
<path d="M2.500 378V6.500q0-3 3-3h185q3 0 3 3V25" fill="none" stroke="#808080"/><path d="M3.500 377V7.500q0-3 3-3h183" fill="none" stroke="#fff"/>
</svg>
<span class="b" style="left:558px;top:306px;transform:scaleX(.96);transform-origin:0 0">Corpo del modello</span>
<span class="t c" style="left:704px;top:305px;width:195px">Utenti abilitati</span>
<span class="t c" style="left:900px;top:305px;width:193px">Filtri linee da visualizzare</span>
<span class="t" style="left:518px;top:327px">Campi corpo</span>
<!-- fields grid -->
<div class="a" style="left:518px;top:345px;width:384px;height:297px;background:#ababab;border:1px solid;border-color:#696969 #fff #fff #696969;box-shadow:inset 1px 1px 0 #404040"></div>
<div class="a" style="left:520px;top:347px;width:380px;height:128px;background:#fff"></div>
<div class="a" style="left:520px;top:347px;width:380px;height:16px;background:#f0f0f0"></div>
<div class="a" style="left:520px;top:347px;width:13px;height:128px;background:#f0f0f0"></div>
<div class="a g2h" style="top:362px;background:#696969"></div><div class="a g2h" style="top:378px"></div><div class="a g2h" style="top:394px"></div><div class="a g2h" style="top:410px"></div><div class="a g2h" style="top:426px"></div><div class="a g2h" style="top:442px"></div><div class="a g2h" style="top:458px"></div><div class="a g2h" style="top:474px;background:#696969"></div>
<div class="a g2v" style="left:532px;background:#696969"></div><div class="a g2v" style="left:665px"></div><div class="a g2v" style="left:832px"></div><div class="a g2v" style="left:899px;background:#696969"></div>
<div class="a g2v" style="left:665px;height:16px;background:#696969"></div><div class="a g2v" style="left:832px;height:16px;background:#696969"></div>
<div class="a g2r" style="top:378px"></div><div class="a g2r" style="top:394px"></div><div class="a g2r" style="top:410px"></div><div class="a g2r" style="top:426px"></div><div class="a g2r" style="top:442px"></div><div class="a g2r" style="top:458px"></div>
<span class="t" style="left:536px;top:348px">Titolo colonna</span><span class="t" style="left:669px;top:348px">Campo</span><span class="t" style="left:835px;top:348px">Ordinamento</span>
<span class="t" style="left:536px;top:364px">N.Doc.</span><span class="t" style="left:669px;top:364px">Numero documento</span>
<span class="t" style="left:536px;top:380px">Data</span><span class="t" style="left:669px;top:380px">Data documento</span>
<span class="t" style="left:536px;top:396px">Intestatario</span><span class="t" style="left:669px;top:396px">Intestatario documento : Ragion...</span>
<span class="t" style="left:536px;top:412px">Causale</span><span class="t" style="left:669px;top:412px">Causale</span>
<span class="t" style="left:536px;top:428px">Tot.doc.</span><span class="t" style="left:669px;top:428px">Totale documento</span>
<span class="t" style="left:536px;top:444px">Residuo</span><span class="t" style="left:669px;top:444px">Importo residuo scadenze da pa...</span>
<div class="cb" style="left:518px;top:651px"></div>
<span class="t" style="left:536px;top:650px">Raggruppamento valori</span>
<!-- add/remove field buttons -->
<div class="btn" style="left:908px;top:345px;width:57px;height:72px"></div>
<svg class="a" style="left:925px;top:356px" width="23" height="23" viewBox="0 0 23 23"><defs><radialGradient id="rg" cx=".4" cy=".3" r=".8"><stop offset="0" stop-color="#9cf070"/><stop offset=".6" stop-color="#3cc82c"/><stop offset="1" stop-color="#1f9a1a"/></radialGradient><radialGradient id="ro" cx=".4" cy=".3" r=".8"><stop offset="0" stop-color="#ffb080"/><stop offset=".6" stop-color="#f2602c"/><stop offset="1" stop-color="#d23c14"/></radialGradient></defs><circle cx="11.500" cy="11.500" r="11" fill="url(#rg)"/><path d="M4.500 11.500l7-6.500v4h6v5h-6v4z" fill="#fff"/></svg>
<span class="t c" style="left:908px;top:387px;width:57px">Aggiungi</span><span class="t c" style="left:908px;top:400px;width:57px">campo</span>
<div class="btn" style="left:908px;top:420px;width:57px;height:71px"></div>
<svg class="a" style="left:925px;top:430px" width="23" height="23" viewBox="0 0 23 23"><circle cx="11.500" cy="11.500" r="11" fill="url(#ro)"/><path d="M18.500 11.500l-7-6.500v4h-6v5h6v4z" fill="#fff"/></svg>
<span class="t c" style="left:908px;top:461px;width:57px">Rimuovi</span><span class="t c" style="left:908px;top:474px;width:57px">campo</span>
<div class="btn" style="left:908px;top:563px;width:27px;height:29px"></div>
<svg class="a" style="left:911px;top:567px" width="21" height="20" viewBox="0 0 21 20"><path d="M10.500 1L20 10.500h-5.500V19h-8v-8.500H1z" fill="#62d838" stroke="#2f9a1a" stroke-width="1"/><path d="M10.500 3L17 9.500h-4V12H8V9.500H4z" fill="#a6f07a" opacity=".7"/></svg>
<div class="btn" style="left:908px;top:597px;width:27px;height:29px"></div>
<svg class="a" style="left:911px;top:601px" width="21" height="20" viewBox="0 0 21 20"><path d="M10.500 19L20 9.500h-5.500V1h-8v8.500H1z" fill="#62d838" stroke="#2f9a1a" stroke-width="1"/><path d="M8 2.500h5V9H8z" fill="#a6f07a" opacity=".7"/></svg>
<!-- Campi disponibili -->
<div class="gb" style="left:971px;top:333px;width:305px;height:337px"></div>
<div class="gl" style="left:978px;top:327px;width:80px"></div>
<span class="t" style="left:980px;top:327px">Campi disponibili</span>
<div class="inp" style="left:976px;top:345px;width:295px;height:21px;background:#ffff80"></div>
<span class="b" style="left:981px;top:349px">Tutti i campi</span>
<div class="dd" style="left:1252px;top:347px;height:17px"></div>
<div class="inp" style="left:976px;top:369px;width:295px;height:290px"></div>
<div class="a" style="left:978px;top:618px;width:274px;height:13px;background:#3399ff"></div>
<div class="a" id="lst" style="left:980px;top:372px;width:272px;height:285px;overflow:hidden">
<span class="li" style="top:0px">Numero di segnacolli inseriti</span>
<span class="li" style="top:13px">Banca di appoggio</span>
<span class="li" style="top:26px">Banca : Sede/filiale</span>
<span class="li" style="top:39px">Totale suddiviso per codici IVA (Importo imponibile)</span>
<span class="li" style="top:52px">Totale suddiviso per codici IVA (Aliquota %)</span>
<span class="li" style="top:65px">Totale suddiviso per codici IVA (Descrizione aliquota)</span>
<span class="li" style="top:78px">Totale suddiviso per codici IVA (Importo IVA)</span>
<span class="li" style="top:91px">Totale suddiviso per codici IVA (Codice alternativo aliquot</span>
<span class="li" style="top:104px">Totale evaso/chiuso (Imposte escluse)</span>
<span class="li" style="top:117px">Totale evaso/chiuso (Imposte comprese)</span>
<span class="li" style="top:130px">Totale imposte evase/chiuse</span>
<span class="li" style="top:143px">Totale da evadere/da chiudere (Imposte escluse)</span>
<span class="li" style="top:156px">Totale da evadere/da chiudere (Imposte comprese)</span>
<span class="li" style="top:169px">Totale imposte da evadere/da chiudere</span>
<span class="li" style="top:182px">Importo totale scadenze generate</span>
<span class="li" style="top:195px">Dettaglio scadenze generate (importo e data)</span>
<span class="li" style="top:208px">Dettaglio scadenze generate (solo importo)</span>
<span class="li" style="top:221px">Dettaglio scadenze generate (solo data)</span>
<span class="li" style="top:234px">Importo totale scadenze pagate</span>
<span class="li w" style="top:247px">Importo residuo scadenze da pagare</span>
<span class="li" style="top:260px">Totale ritenute al netto delle imposte</span>
<span class="li" style="top:273px">Totale imposte su ritenute</span>
</div>
<!-- scrollbar -->
<div class="a" style="left:1253px;top:371px;width:16px;height:286px;background:linear-gradient(90deg,#e4e4e4,#f4f4f4 60%)"></div>
<div class="a" style="left:1258px;top:378px;border:3px solid transparent;border-bottom:3px solid #444;border-top:0"></div>
<div class="a" style="left:1258px;top:648px;border:3px solid transparent;border-top:3px solid #444;border-bottom:0"></div>
<div class="a" style="left:1253px;top:550px;width:15px;height:31px;border:1px solid #9a9a9a;border-radius:2px;background:linear-gradient(90deg,#fdfdfd 30%,#d4d4d4)"></div>
<div class="a" style="left:1257px;top:561px;width:7px;height:7px;background:repeating-linear-gradient(#6a6a6a 0,#6a6a6a 1px,transparent 1px,transparent 2px)"></div>
<!-- ===== red annotations (ellipses + arrow) ===== -->
<svg class="a" style="left:0;top:0;pointer-events:none" width="1295" height="768" viewBox="0 0 1295 768">
<defs><filter id="sh" x="-10%" y="-10%" width="130%" height="130%"><feGaussianBlur in="SourceAlpha" stdDeviation="2"/><feOffset dx="3" dy="4"/><feComponentTransfer><feFuncA type="linear" slope=".55"/></feComponentTransfer><feMerge><feMergeNode/><feMergeNode in="SourceGraphic"/></feMerge></filter></defs>
<g filter="url(#sh)" fill="none" stroke="#b3111a">
<rect x="424.500" y="211.500" width="75" height="39.500" rx="27" ry="19.750" stroke-width="2.200"/>
<path d="M497.500 251L956.500 601.500" stroke-width="2.900"/>
<path d="M968 613.500L951.500 610.500L960.500 599Z" fill="#b3111a" stroke-width="1"/>
<rect x="967.500" y="610.500" width="201.500" height="29.500" rx="40" ry="14.750" stroke-width="2.200"/>
</g>
</svg>
<!-- ===== main status bar ===== -->
<div class="a sc" style="left:3px;top:745px;width:553px;height:24px"></div>
<div class="a sc" style="left:559px;top:745px;width:555px;height:24px"></div>
<div class="a sc" style="left:1116px;top:745px;width:78px;height:24px"></div>
<div class="a sc" style="left:1197px;top:745px;width:79px;height:24px"></div>
<span class="b" style="left:8px;top:750px;font-size:12.1px">PINCO PALLINO SRL</span>
<span class="b" style="left:564px;top:750px;font-size:12.1px">Intestatario licenza : READY TECNOSERVICE SRL</span>
<span class="b" style="left:1121px;top:750px;font-size:12.1px;letter-spacing:.7px">03/10/2011</span>
<span class="b" style="left:1203px;top:750px;font-size:12.1px">23:06</span>
</body></html>
